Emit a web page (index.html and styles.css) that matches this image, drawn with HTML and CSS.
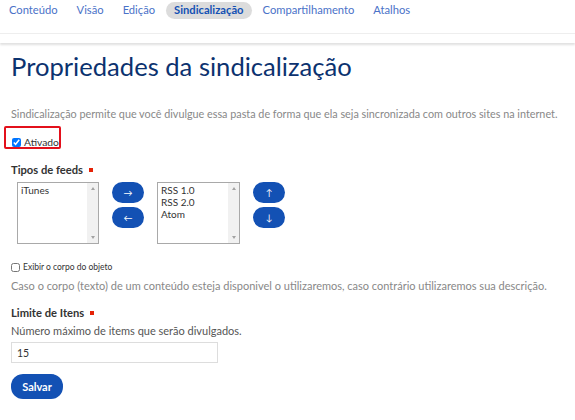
FILE: index.html
```html
<!DOCTYPE html>
<html lang="pt-BR">
<head>
<meta charset="utf-8">
<title>Sindicalização</title>
<link rel="stylesheet" href="styles.css">
</head>
<body>
<nav class="tabs">
  <a class="tab" href="#">Conteúdo</a>
  <a class="tab" href="#">Visão</a>
  <a class="tab" href="#">Edição</a>
  <a class="tab active" href="#">Sindicalização</a>
  <a class="tab" href="#">Compartilhamento</a>
  <a class="tab" href="#">Atalhos</a>
</nav>
<div class="bar"></div>
<main class="content">
  <h1 class="title">Propriedades da sindicalização</h1>
  <p class="desc">Sindicalização permite que você divulgue essa pasta de forma que ela seja sincronizada com outros sites na internet.</p>
  <div class="highlight">
    <label class="check"><input type="checkbox" checked><span>Ativado</span></label>
  </div>
  <div class="field feeds">
    <div class="label">Tipos de feeds <span class="req"></span></div>
    <div class="widget">
      <div class="list" role="listbox">
        <div class="options">
          <div class="opt" role="option">iTunes</div>
        </div>
        <div class="scroll"><span class="up"></span><span class="down"></span></div>
      </div>
      <div class="btns">
        <button class="btn arrow" type="button">&rarr;</button>
        <button class="btn arrow" type="button">&larr;</button>
      </div>
      <div class="list wide" role="listbox">
        <div class="options">
          <div class="opt" role="option">RSS 1.0</div>
          <div class="opt" role="option">RSS 2.0</div>
          <div class="opt" role="option">Atom</div>
        </div>
        <div class="scroll"><span class="up"></span><span class="down"></span></div>
      </div>
      <div class="btns">
        <button class="btn arrow" type="button">&uarr;</button>
        <button class="btn arrow" type="button">&darr;</button>
      </div>
    </div>
  </div>
  <label class="check small"><input type="checkbox"><span>Exibir o corpo do objeto</span></label>
  <p class="desc help">Caso o corpo (texto) de um conteúdo esteja disponivel o utilizaremos, caso contrário utilizaremos sua descrição.</p>
  <div class="field limit">
    <div class="label">Limite de Itens <span class="req"></span></div>
    <div class="hint">Número máximo de items que serão divulgados.</div>
    <input class="text" type="text" value="15">
  </div>
  <button class="btn save" type="button">Salvar</button>
</main>
</body>
</html>
```
FILE: styles.css
```css
* { box-sizing: border-box; }
body {
  margin: 0;
  font-family: Lato, "Open Sans", sans-serif;
  color: #333;
  background: #fff;
}
.tabs {
  display: flex;
  align-items: center;
  gap: 3px;
  padding: 2px 1px 0;
}
.tab {
  font-size: 11.2px;
  color: #4a72c8;
  text-decoration: none;
  padding: 0 8px;
  border-radius: 9px;
  line-height: 16px;
  height: 17px;
}
.tab.active {
  background: #dcdcdc;
  color: #1351b4;
  font-weight: 700;
}
.bar {
  margin-top: 14px;
  height: 10px;
  border-top: 1px solid #eeeeee;
  box-shadow: 0 2px 2px rgba(0,0,0,0.12);
}
.content {
  padding: 0 11px;
}
.title {
  margin: 8px 0 0;
  font-size: 25.6px;
  font-weight: 400;
  color: #0c326f;
  line-height: 30px;
  white-space: nowrap;
}
.desc {
  margin: 26px 0 0;
  font-size: 10.8px;
  color: #888;
  line-height: 14px;
  white-space: nowrap;
}
.highlight {
  margin: 5px 0 0 -7px;
  width: 57px;
  height: 23px;
  border: 2px solid #e3101b;
  border-radius: 2px;
  padding: 8px 0 0 6px;
}
.check {
  display: flex;
  align-items: center;
  gap: 3px;
  font-size: 10.3px;
  color: #333;
  line-height: 12px;
  height: 12px;
}
.check input {
  margin: 0;
  width: 9px;
  height: 9px;
  flex: none;
}
.feeds { margin-top: 14px; }
.label {
  font-size: 11.2px;
  font-weight: 700;
  color: #333;
  display: flex;
  align-items: center;
  gap: 6px;
  line-height: 14px;
  height: 14px;
}
.req {
  width: 4px;
  height: 4px;
  background: #e52207;
}
.widget {
  display: flex;
  align-items: flex-start;
  margin: 5px 0 0 6px;
}
.list {
  display: flex;
  width: 82px;
  height: 62px;
  border: 1px solid #a9a9a9;
  background: #fff;
}
.list.wide { width: 83px; }
.options {
  flex: 1;
  padding: 1px 3px;
  font-size: 10px;
  line-height: 12px;
  color: #333;
}
.scroll {
  width: 11px;
  background: #f1f1f1;
  display: flex;
  flex-direction: column;
  justify-content: space-between;
  align-items: center;
  padding: 4px 0;
}
.up, .down {
  width: 0;
  height: 0;
  border-left: 2.5px solid transparent;
  border-right: 2.5px solid transparent;
}
.up { border-bottom: 3px solid #a3a3a3; }
.down { border-top: 3px solid #a3a3a3; }
.btns {
  display: flex;
  flex-direction: column;
  gap: 4px;
  margin: 0 13px;
}
.btn {
  background: #1351b4;
  color: #fff;
  border: none;
  border-radius: 12px;
  font-family: inherit;
  cursor: pointer;
}
.arrow {
  width: 32px;
  height: 21px;
  font-size: 9px;
  padding: 0;
}
.check.small {
  margin-top: 17px;
  font-size: 8.5px;
}
.help {
  margin-top: 6px;
  font-size: 11px;
}
.limit { margin-top: 13px; }
.hint {
  margin-top: 4px;
  font-size: 11px;
  color: #555;
  line-height: 14px;
}
.text {
  display: block;
  margin: 4px 0 0;
  width: 207px;
  height: 21px;
  border: 1px solid #ddd;
  font-family: inherit;
  font-size: 10.5px;
  padding: 0 5px;
  color: #333;
}
.save {
  display: block;
  margin-top: 11px;
  width: 52px;
  height: 25px;
  font-size: 11px;
  font-weight: 700;
  padding: 0;
}
```
